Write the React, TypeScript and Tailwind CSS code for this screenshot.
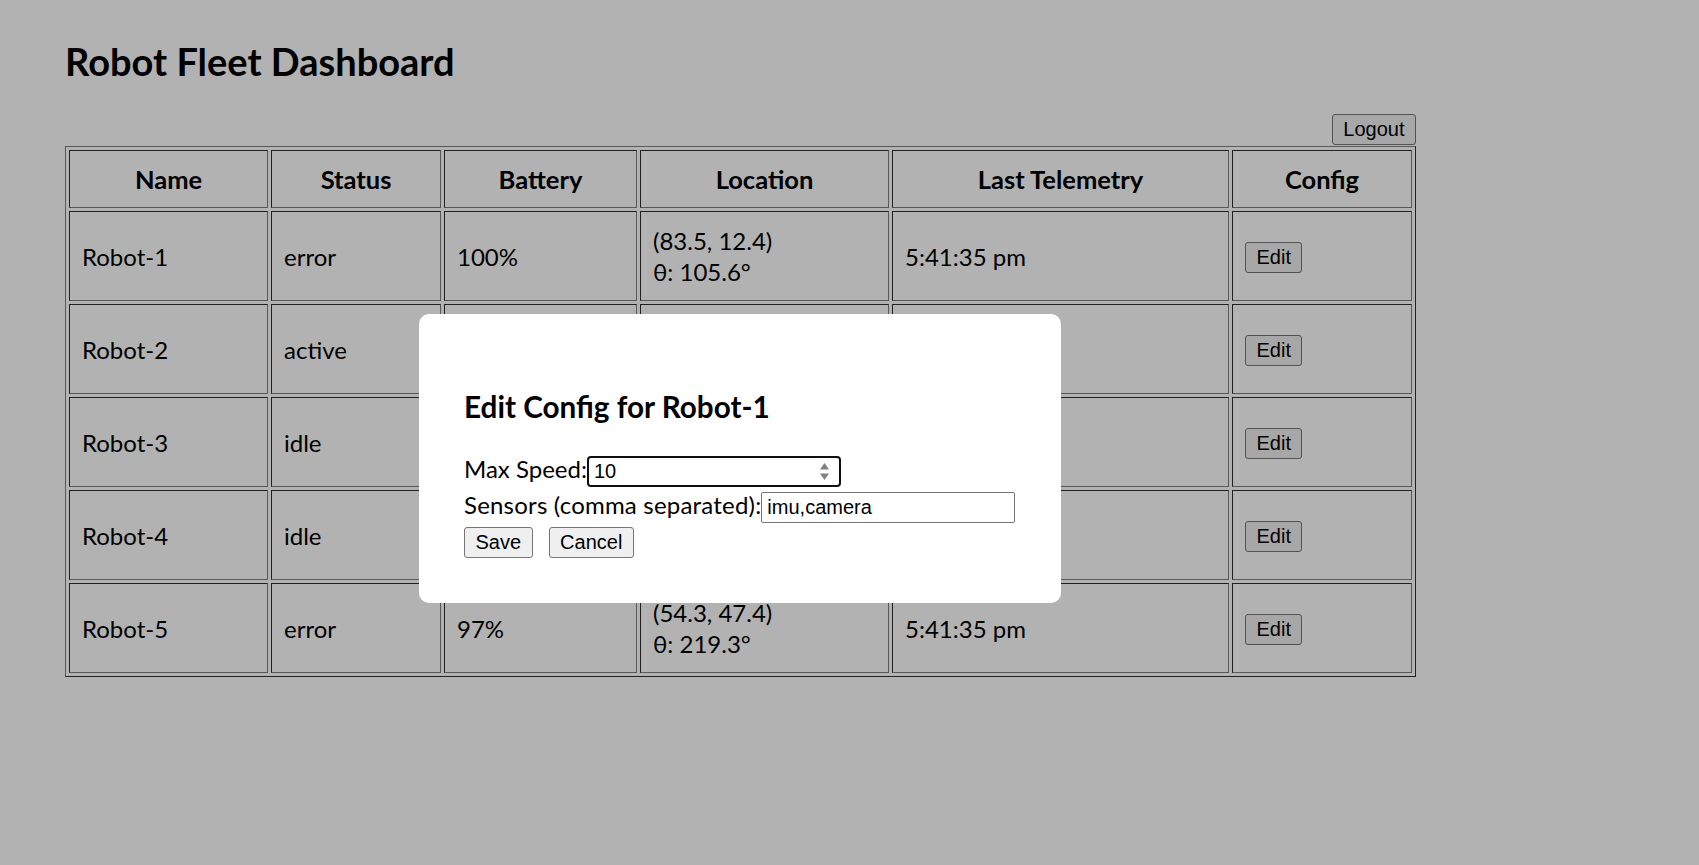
const robots = [
  { name: "Robot-1", status: "error", battery: "100%", pos: "(83.5, 12.4)", theta: "105.6", time: "5:41:35 pm" },
  { name: "Robot-2", status: "active", battery: "74%", pos: "(21.9, 66.3)", theta: "38.2", time: "5:41:35 pm" },
  { name: "Robot-3", status: "idle", battery: "52%", pos: "(47.1, 9.8)", theta: "301.4", time: "5:41:35 pm" },
  { name: "Robot-4", status: "idle", battery: "88%", pos: "(12.6, 35.0)", theta: "172.9", time: "5:41:35 pm" },
  { name: "Robot-5", status: "error", battery: "97%", pos: "(54.3, 47.4)", theta: "219.3", time: "5:41:35 pm" }
];

const cols = [
  { label: "Name", w: "w-[199px]" },
  { label: "Status", w: "w-[170px]" },
  { label: "Battery", w: "w-[193px]" },
  { label: "Location", w: "w-[249px]" },
  { label: "Last Telemetry", w: "w-[337px]" },
  { label: "Config", w: "w-[180px]" }
];

const btn =
  "rounded-[3px] border border-[#767676] bg-[#efefef] px-[10.5px] py-[3px] font-['Liberation_Sans',Arial,sans-serif] text-[20px] leading-[23px] text-black";

const cell =
  "border border-t-[#303030] border-l-[#303030] border-b-[#808080] border-r-[#808080] px-[12px] py-[13px]";

export default function App() {
  return (
    <div className="relative min-h-screen bg-white font-['Lato',sans-serif] text-black">
      <div className="w-[1416px] pl-[65px] pt-[39px]">
        <h1 className="text-[38px] font-bold leading-[44px]">Robot Fleet Dashboard</h1>
        <div className="mt-[31px] flex justify-end">
          <button type="button" className={btn}>
            Logout
          </button>
        </div>
        <table className="mt-[1px] w-[1351px] table-fixed border-separate border-spacing-[3px] border border-t-[#808080] border-l-[#808080] border-b-[#303030] border-r-[#303030]">
          <thead>
            <tr>
              {cols.map((c) => (
                <th key={c.label} className={`${c.w} ${cell} text-center text-[25.5px] font-bold leading-[30px]`}>
                  {c.label}
                </th>
              ))}
            </tr>
          </thead>
          <tbody className="text-[24px] leading-[31px]">
            {robots.map((r) => (
              <tr key={r.name} className="h-[90px]">
                <td className={cell}>{r.name}</td>
                <td className={cell}>{r.status}</td>
                <td className={cell}>{r.battery}</td>
                <td className={cell}>
                  {r.pos}
                  <br />
                  θ: {r.theta}°
                </td>
                <td className={cell}>{r.time}</td>
                <td className={cell}>
                  <button type="button" className={btn}>
                    Edit
                  </button>
                </td>
              </tr>
            ))}
          </tbody>
        </table>
      </div>

      <div className="fixed inset-0 bg-black/30" />

      <div className="absolute left-[419px] top-[314px] h-[289px] w-[642px] rounded-[10px] bg-white px-[45px] pt-[45px]">
        <h3 className="mt-[30px] text-[29.7px] font-bold leading-[36px]">Edit Config for Robot-1</h3>
        <div className="mt-[28px] text-[24px] leading-[31px]">
          <div className="flex h-[36px] items-baseline">
            <span>Max Speed:</span>
            <div className="flex h-[31px] w-[254px] items-center justify-between rounded-[4px] border-2 border-[#101010] pl-[5px] pr-[10px] font-['Liberation_Sans',Arial,sans-serif] text-[20px] leading-[23px]">
              <span>10</span>
              <svg width="9" height="17" viewBox="0 0 9 17" aria-hidden>
                <path d="M4.5 0L9 6.5H0Z" fill="#808080" />
                <path d="M0 10.5H9L4.5 17Z" fill="#808080" />
              </svg>
            </div>
          </div>
          <div className="flex h-[36px] items-baseline">
            <span className="tracking-[0.2px]">Sensors (comma separated):</span>
            <input
              readOnly
              defaultValue="imu,camera"
              className="h-[31px] w-[254px] rounded-[2px] border border-[#767676] px-[5px] font-['Liberation_Sans',Arial,sans-serif] text-[20px] leading-[23px] outline-none"
            />
          </div>
          <div className="flex h-[36px] items-start gap-[16px] pt-[2px]">
            <button type="button" className={btn}>
              Save
            </button>
            <button type="button" className={btn}>
              Cancel
            </button>
          </div>
        </div>
      </div>
    </div>
  );
}
